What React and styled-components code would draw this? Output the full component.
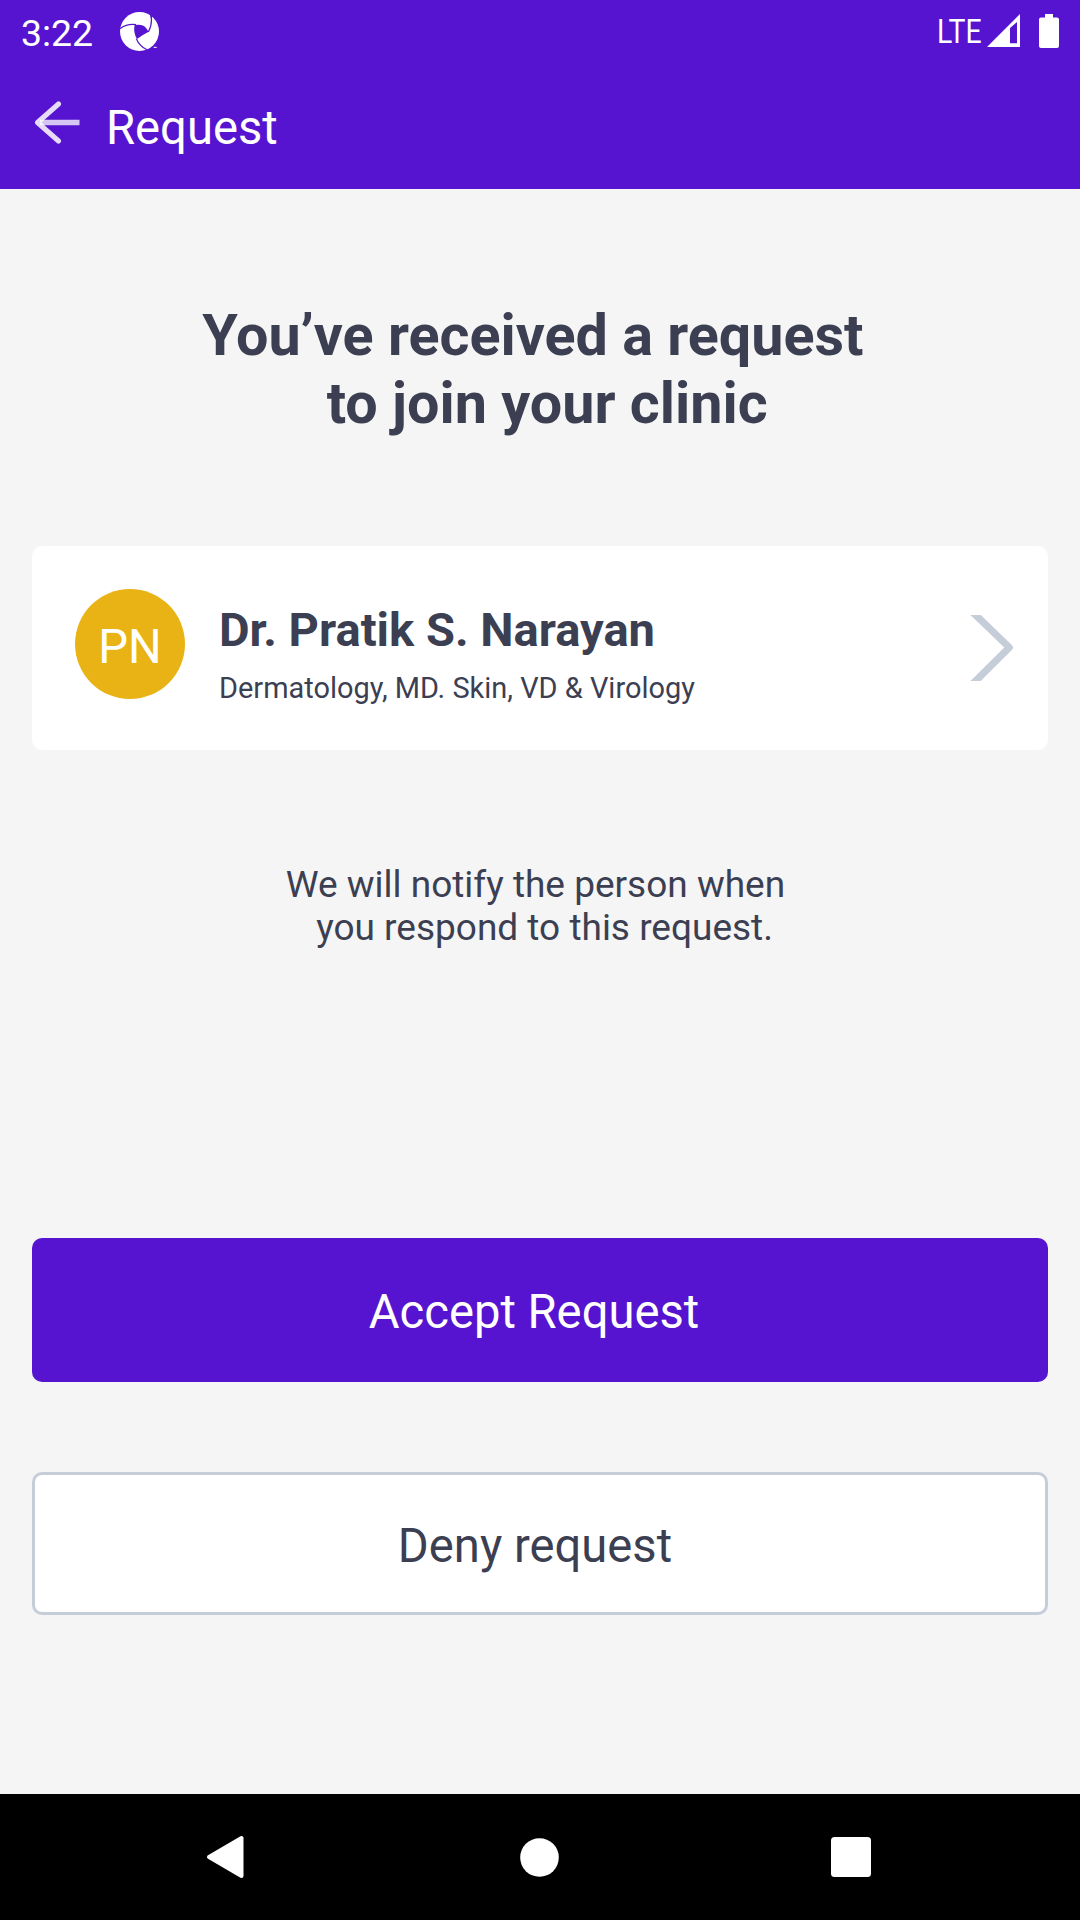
import React from "react";
import styled, { createGlobalStyle } from "styled-components";

const purple = "#5614d0";
const ink = "#3c3f52";
const steel = "#c5ced8";

const GlobalStyle = createGlobalStyle`
  html, body { margin: 0; padding: 0; }
  body { background: #f5f5f5; font-family: Roboto, "Noto Sans", sans-serif; }
  * { box-sizing: border-box; }
`;

const Screen = styled.div`
  width: 1080px;
  height: 1920px;
  display: flex;
  flex-direction: column;
  background: #f5f5f5;
  color: ${ink};
  overflow: hidden;
`;

const StatusBar = styled.div`
  flex: none;
  height: 64px;
  display: flex;
  align-items: flex-start;
  padding: 0 21px 0 21px;
  background: ${purple};
  color: #fff;
`;

const Clock = styled.span`
  width: 99px;
  margin-top: 10px;
  font-size: 37.4px;
  line-height: 46px;
`;

const Network = styled.span`
  width: 50px;
  margin: 13px 0 0 auto;
  font-size: 33px;
  line-height: 38px;
  transform: scaleX(0.86);
  transform-origin: left center;
`;

const Glyph = styled.svg`
  flex: none;
  display: block;
  width: ${(p) => p.$w}px;
  height: ${(p) => p.$h}px;
  margin-top: ${(p) => p.$top || 0}px;
  margin-left: ${(p) => p.$left || 0}px;
`;

const AppBar = styled.header`
  flex: none;
  height: 125px;
  display: flex;
  align-items: flex-start;
  padding-left: 34px;
  background: ${purple};
  color: #fff;
`;

const AppTitle = styled.h1`
  margin: 36px 0 0 26px;
  font-size: 47.2px;
  font-weight: 400;
  line-height: 56px;
`;

const Content = styled.main`
  flex: 1;
  display: flex;
  flex-direction: column;
  padding: 113px 32px 0;
`;

const Heading = styled.h2`
  margin: 0;
  font-size: 57.5px;
  font-weight: 700;
  line-height: 68px;
  text-align: center;
  white-space: pre;
`;

const DoctorCard = styled.section`
  display: flex;
  align-items: flex-start;
  height: 204px;
  margin-top: 108px;
  padding: 43px 34px 0 43px;
  border-radius: 10px;
  background: #fff;
`;

const Avatar = styled.div`
  flex: none;
  width: 110px;
  height: 110px;
  padding-top: 30px;
  border-radius: 50%;
  background: #eab315;
  color: #fff;
  font-size: 47.2px;
  line-height: 56px;
  text-align: center;
`;

const DoctorInfo = styled.div`
  flex: 1;
  display: flex;
  flex-direction: column;
  padding: 13px 0 0 34px;
`;

const DoctorName = styled.div`
  font-size: 47.1px;
  font-weight: 700;
  line-height: 56px;
`;

const Specialty = styled.div`
  margin-top: 13px;
  font-size: 28.95px;
  line-height: 34px;
`;

const Note = styled.p`
  margin: 113px 0 0;
  font-size: 37px;
  line-height: 43px;
  text-align: center;
  white-space: pre;
`;

const Actions = styled.div`
  display: flex;
  flex-direction: column;
  gap: 90px;
  margin-top: 289px;
`;

const Button = styled.button`
  height: ${(p) => (p.$primary ? 144 : 143)}px;
  padding: 0;
  border: ${(p) => (p.$primary ? "0" : `3px solid ${steel}`)};
  border-radius: 10px;
  background: ${(p) => (p.$primary ? purple : "#fff")};
  color: ${(p) => (p.$primary ? "#fff" : ink)};
  font-family: inherit;
  font-size: 47.2px;
  line-height: 56px;
  text-align: center;
  white-space: pre;
`;

const ButtonLabel = styled.span`
  display: block;
  padding: ${(p) => p.$pad};
`;

const NavBar = styled.nav`
  flex: none;
  height: 126px;
  display: flex;
  align-items: center;
  justify-content: space-between;
  padding: 0 209px 0 206px;
  background: #000;
`;

export default function App() {
  return (
    <Screen>
      <GlobalStyle />
      <StatusBar>
        <Clock>3:22</Clock>
        <Glyph $w={39} $h={39} $top={12} viewBox="0 0 117 117">
          <circle cx="58.5" cy="58.5" r="58.5" fill="#fff" />
          <path d="M44 39 Q60 36 72 42 Q80 48 86 59 Q68 68 51 81 Q39 62 44 39Z" fill={purple} />
          <path d="M0 50 Q22 34 48 38 M85 60 Q98 38 93 8 M49 80 Q58 102 82 114" fill="none" stroke={purple} strokeWidth="3.6" />
          <path d="M89 4 L97 12 L93 22Z M100 108 L117 98 V117 H84Z" fill={purple} />
          <path d="M101 106 H110" stroke="#fff" strokeWidth="3" />
        </Glyph>
        <Network>LTE</Network>
        <Glyph $w={33} $h={33} $top={14} viewBox="0 0 33 33">
          <path fillRule="evenodd" fill="#fff" d="M0 33 L33 0 V33Z M23 14 V29.2 H30 V8Z" />
        </Glyph>
        <Glyph $w={20} $h={34} $top={14} $left={19} viewBox="0 0 20 34">
          <path fill="#fff" d="M6 0 H14 V3.5 H18 Q20 3.5 20 5.5 V32 Q20 34 18 34 H2 Q0 34 0 32 V5.5 Q0 3.5 2 3.5 H6Z" />
        </Glyph>
      </StatusBar>
      <AppBar>
        <Glyph $w={46} $h={44} $top={37} viewBox="0 0 46 44">
          <path d="M6 21.5 H45.5" stroke="#fff" strokeOpacity="0.76" strokeWidth="5.5" />
          <path d="M24.5 3 L3.5 21.5 L24.5 40" fill="none" stroke="#fff" strokeOpacity="0.85" strokeWidth="5" strokeLinecap="round" strokeLinejoin="round" />
        </Glyph>
        <AppTitle>Request</AppTitle>
      </AppBar>
      <Content>
        <Heading>{"You’ve received a request \n to join your clinic"}</Heading>
        <DoctorCard>
          <Avatar>PN</Avatar>
          <DoctorInfo>
            <DoctorName>Dr. Pratik S. Narayan</DoctorName>
            <Specialty>Dermatology, MD. Skin, VD &amp; Virology</Specialty>
          </DoctorInfo>
          <Glyph $w={44} $h={66} $top={26} viewBox="0 0 44 66">
            <path d="M1.5 -4 L39.3 32.5 L1.5 70" fill="none" stroke={steel} strokeWidth="7.2" strokeLinejoin="round" />
          </Glyph>
        </DoctorCard>
        <Note>{"We will notify the person when \n you respond to this request."}</Note>
        <Actions>
          <Button $primary>
            <ButtonLabel $pad="3px 12px 0 0">Accept Request</ButtonLabel>
          </Button>
          <Button>
            <ButtonLabel $pad="5px 10px 0 0">Deny request</ButtonLabel>
          </Button>
        </Actions>
      </Content>
      <NavBar>
        <Glyph $w={38} $h={44} viewBox="0 0 38 44">
          <path d="M3 22 L35.5 3 V41Z" fill="#fff" stroke="#fff" strokeWidth="4" strokeLinejoin="round" />
        </Glyph>
        <Glyph $w={39} $h={39} $left={4} viewBox="0 0 39 39">
          <circle cx="19.5" cy="19.5" r="19.3" fill="#fff" />
        </Glyph>
        <Glyph $w={40} $h={40} viewBox="0 0 40 40">
          <rect width="40" height="40" rx="3.5" fill="#fff" />
        </Glyph>
      </NavBar>
    </Screen>
  );
}
